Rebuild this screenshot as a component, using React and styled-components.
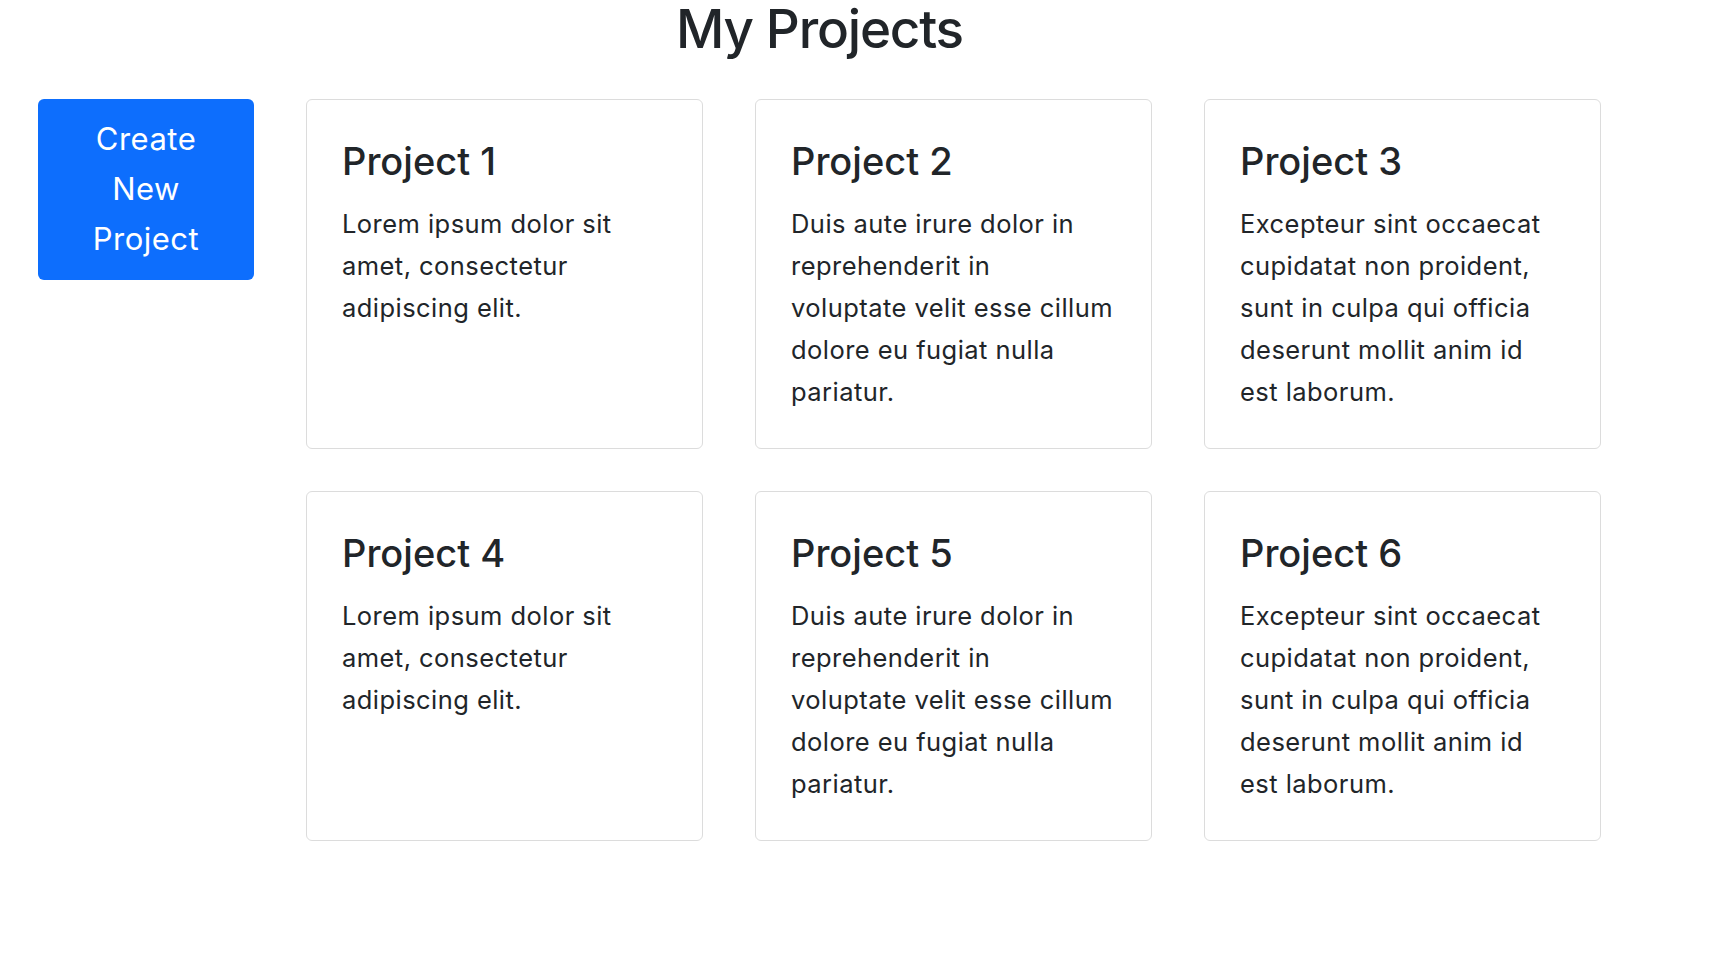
import React from 'react';
import styled, { createGlobalStyle } from 'styled-components';

const GlobalStyle = createGlobalStyle`
  body {
    margin: 0;
    background: #fff;
    color: #212529;
    font-family: Inter, "Noto Sans", sans-serif;
  }
`;

const Page = styled.div`
  width: 1563px;
  padding-left: 38px;
`;

const Title = styled.h1`
  margin: 0 0 43px;
  padding-top: 2px;
  font-size: 53px;
  font-weight: 500;
  line-height: 54px;
  text-align: center;
  letter-spacing: -1.2px;
`;

const Row = styled.div`
  display: flex;
  align-items: flex-start;
  gap: 52px;
`;

const CreateButton = styled.button`
  width: 218px;
  padding: 15px 12px 16px;
  border: none;
  border-radius: 6px;
  background: #0d6efd;
  color: #fff;
  font-family: inherit;
  font-size: 31px;
  line-height: 50px;
  letter-spacing: 0.5px;
  text-align: center;
  cursor: pointer;
`;

const Grid = styled.div`
  display: grid;
  grid-template-columns: repeat(3, 397px);
  column-gap: 52px;
  row-gap: 42px;
`;

const Card = styled.div`
  border: 1px solid #dcdcdc;
  border-radius: 6px;
  padding: 38px 35px 35px;
`;

const CardTitle = styled.h2`
  margin: 0 0 19px;
  font-size: 38px;
  font-weight: 500;
  line-height: 46px;
  letter-spacing: 0;
`;

const CardText = styled.p`
  margin: 0;
  font-size: 25.5px;
  line-height: 42px;
  letter-spacing: 0.45px;
`;

const Line = styled.span`
  display: block;
  white-space: nowrap;
`;

const texts = [
  ['Lorem ipsum dolor sit', 'amet, consectetur', 'adipiscing elit.'],
  [
    'Duis aute irure dolor in',
    'reprehenderit in',
    'voluptate velit esse cillum',
    'dolore eu fugiat nulla',
    'pariatur.',
  ],
  [
    'Excepteur sint occaecat',
    'cupidatat non proident,',
    'sunt in culpa qui officia',
    'deserunt mollit anim id',
    'est laborum.',
  ],
];

const projects = [1, 2, 3, 4, 5, 6].map((n) => ({
  name: `Project ${n}`,
  lines: texts[(n - 1) % 3],
}));

export default function App() {
  return (
    <Page>
      <GlobalStyle />
      <Title>My Projects</Title>
      <Row>
        <CreateButton>
          Create
          <br />
          New
          <br />
          Project
        </CreateButton>
        <Grid>
          {projects.map((p) => (
            <Card key={p.name}>
              <CardTitle>{p.name}</CardTitle>
              <CardText>
                {p.lines.map((l) => (
                  <Line key={l}>{l}</Line>
                ))}
              </CardText>
            </Card>
          ))}
        </Grid>
      </Row>
    </Page>
  );
}
